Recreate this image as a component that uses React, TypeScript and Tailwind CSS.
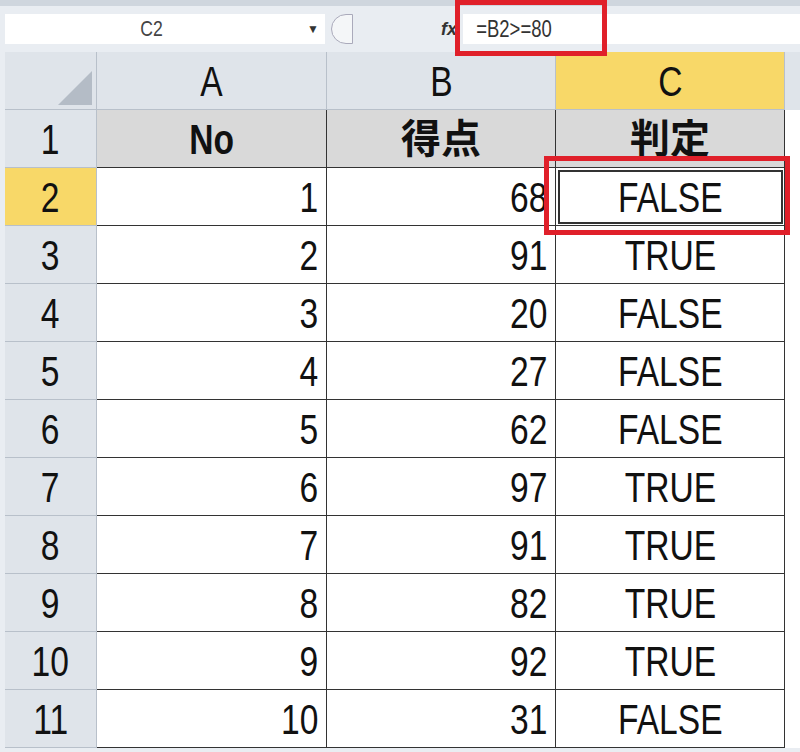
const rows: [number, number, string][] = [
  [1, 68, 'FALSE'], [2, 91, 'TRUE'], [3, 20, 'FALSE'], [4, 27, 'FALSE'], [5, 62, 'FALSE'],
  [6, 97, 'TRUE'], [7, 91, 'TRUE'], [8, 82, 'TRUE'], [9, 92, 'TRUE'], [10, 31, 'FALSE'],
];

function T({ children, right }: { children: React.ReactNode; right?: boolean }) {
  return <span className={`inline-block scale-x-[0.84] scale-y-[1.05] ${right ? 'origin-right' : 'origin-center'}`}>{children}</span>;
}

export default function App() {
  return (
    <div className="w-[800px] h-[752px] overflow-hidden bg-[#e9edf2] text-[#111] relative" style={{ fontFamily: '"Liberation Sans", "Noto Sans CJK JP", sans-serif' }}>
      {/* formula bar */}
      <div className="h-[52px] flex items-center pl-[5px] border-t-[6px] border-[#cfd6de]">
        <div className="w-[320px] h-[30px] bg-white flex items-center text-[21px] text-[#444] relative">
          <span className="ml-[133px]"><T>C2</T></span>
          <span className="ml-auto mr-[6px] text-[12px] text-[#333]">▼</span>
        </div>
        <div className="w-[22px] h-[30px] rounded-l-full border border-[#aab] bg-[#f4f6f8] ml-[6px]" />
        <div className="w-[90px]" />
        <span className="italic text-[18px] font-bold text-[#333] -ml-[2px]">fx</span>
        <div className="flex-1 h-[30px] bg-white ml-[6px] flex items-center text-[22px] text-[#333] pl-[6px]"><T>=B2&gt;=80</T></div>
      </div>
      {/* red box on formula */}
      <div className="absolute left-[455px] top-0 w-[152px] h-[56px] border-[5px] border-[#e0202a]" />
      <div className="pl-[5px]">
        <div className="grid grid-cols-[92px_230px_229px_229px_15px] text-[40px]">
          {/* header */}
          <div className="h-[58px] bg-[#dfe4ea] border-r border-b border-[#b8c0ca] flex items-end justify-end p-[4px]">
            <div className="w-0 h-0 border-l-[34px] border-l-transparent border-b-[34px] border-b-[#b4bcc6]" />
          </div>
          {['A', 'B'].map((l) => (
            <div key={l} className="h-[58px] bg-[#dfe4ea] border-r border-b border-[#b8c0ca] flex items-center justify-center"><T>{l}</T></div>
          ))}
          <div className="h-[58px] bg-[#f8d868] border-r border-b border-[#b8c0ca] flex items-center justify-center"><T>C</T></div>
          <div className="h-[58px] bg-[#dfe4ea]" />
          {/* row 1 */}
          <div className="h-[58px] bg-[#dfe4ea] border-r border-b border-[#b8c0ca] flex items-center justify-center"><T>1</T></div>
          <div className="h-[58px] bg-[#d9d9d9] border-r border-b border-[#333] flex items-center justify-center font-bold"><T>No</T></div>
          <div className="h-[58px] bg-[#d9d9d9] border-r border-b border-[#333] flex items-center justify-center font-bold">得点</div>
          <div className="h-[58px] bg-[#d9d9d9] border-r border-b border-[#333] flex items-center justify-center font-bold">判定</div>
          <div className="h-[58px] bg-white" />
          {rows.map(([n, s, r], i) => (
            <>
              <div key={`h${i}`} className={`h-[58px] border-r border-b border-[#b8c0ca] flex items-center justify-center ${i === 0 ? 'bg-[#f8d868]' : 'bg-[#dfe4ea]'}`}><T>{i + 2}</T></div>
              <div key={`a${i}`} className="h-[58px] bg-white border-r border-b border-[#333] flex items-center justify-end pr-[8px]"><T right>{n}</T></div>
              <div key={`b${i}`} className="h-[58px] bg-white border-r border-b border-[#333] flex items-center justify-end pr-[8px]"><T right>{s}</T></div>
              <div key={`c${i}`} className={`h-[58px] bg-white border-r border-b border-[#333] flex items-center justify-center ${i === 0 ? 'outline-2 outline-[#333] -outline-offset-[4px] relative' : ''}`}>
                <T>{r}</T>
                {i === 0 && <div className="absolute -left-[12px] -top-[12px] -right-[6px] -bottom-[10px] border-[5px] border-[#e0202a]" />}
              </div>
              <div key={`e${i}`} className="h-[58px] bg-white" />
            </>
          ))}
        </div>
      </div>
    </div>
  );
}
